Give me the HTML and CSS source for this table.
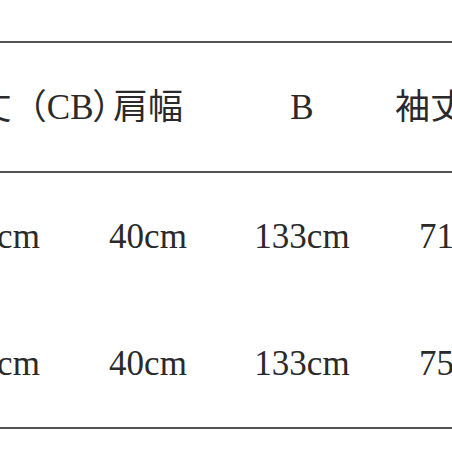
FILE: index.html
```html
<!DOCTYPE html>
<html lang="ja">
<head>
<meta charset="utf-8">
<link rel="stylesheet" href="styles.css">
</head>
<body>
<div class="size-table">
  <div class="row head">
    <div class="cell first-head">着丈（CB<span class="close-paren">）</span></div>
    <div class="cell">肩幅</div>
    <div class="cell">B</div>
    <div class="cell last-head">袖丈</div>
  </div>
  <div class="row">
    <div class="cell">68cm</div>
    <div class="cell">40cm</div>
    <div class="cell">133cm</div>
    <div class="cell">71cm</div>
  </div>
  <div class="row last">
    <div class="cell">70cm</div>
    <div class="cell">40cm</div>
    <div class="cell">133cm</div>
    <div class="cell">75cm</div>
  </div>
</div>
</body>
</html>
```

FILE: styles.css
```css
html, body {
  margin: 0;
  padding: 0;
  background: #ffffff;
  overflow: hidden;
  width: 452px;
  height: 452px;
}

.size-table {
  margin-top: 41px;
  margin-left: -80px;
  width: 606px;
  border-top: 2px solid #555555;
  font-family: "Liberation Serif", "Noto Sans CJK JP", serif;
  font-size: 35px;
  line-height: 35px;
  color: #2a2a2a;
}

.row {
  display: grid;
  grid-template-columns: 162px 132px 176px 136px;
  align-items: center;
  height: 127px;
}

.row.head {
  height: 128px;
  border-bottom: 2px solid #555555;
}

.row.last {
  border-bottom: 2px solid #555555;
}

.cell {
  text-align: center;
  white-space: nowrap;
}

.first-head {
  text-align: right;
  margin-right: -31px;
}

.close-paren {
  font-feature-settings: "palt";
  padding-right: 2px;
}

.last-head {
  text-align: left;
  padding-left: 5px;
}
```
